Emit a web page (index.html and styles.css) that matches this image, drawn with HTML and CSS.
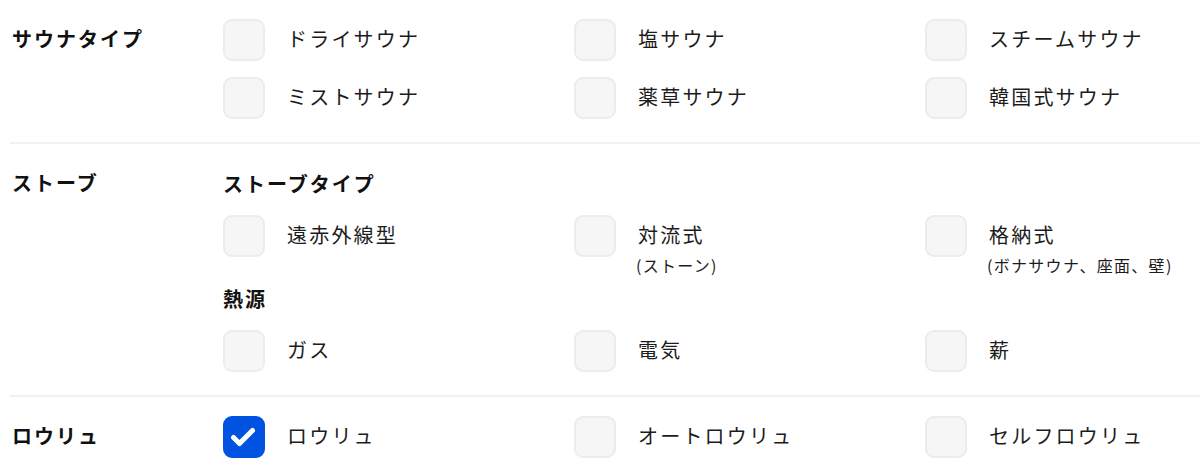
FILE: index.html
```html
<!DOCTYPE html>
<html lang="ja">
<head>
    <meta charset="UTF-8">
    <meta name="viewport" content="width=device-width, initial-scale=1.0">
    <title>サウナ設備</title>
    <link rel="stylesheet" href="styles.css">
</head>
<body>
    <div class="filters">
        <section class="filter-section">
            <h2 class="section-title">サウナタイプ</h2>
            <div class="section-body">
                <div class="option-grid">
                    <label class="option"><span class="box"></span><span class="option-text">ドライサウナ</span></label>
                    <label class="option"><span class="box"></span><span class="option-text">塩サウナ</span></label>
                    <label class="option"><span class="box"></span><span class="option-text">スチームサウナ</span></label>
                    <label class="option"><span class="box"></span><span class="option-text">ミストサウナ</span></label>
                    <label class="option"><span class="box"></span><span class="option-text">薬草サウナ</span></label>
                    <label class="option"><span class="box"></span><span class="option-text">韓国式サウナ</span></label>
                </div>
            </div>
        </section>

        <section class="filter-section">
            <h2 class="section-title">ストーブ</h2>
            <div class="section-body">
                <h3 class="sub-title">ストーブタイプ</h3>
                <div class="option-grid">
                    <label class="option"><span class="box"></span><span class="option-text">遠赤外線型</span></label>
                    <label class="option"><span class="box"></span><span class="option-text">対流式<small class="option-note">(ストーン)</small></span></label>
                    <label class="option"><span class="box"></span><span class="option-text">格納式<small class="option-note">(ボナサウナ、座面、壁)</small></span></label>
                </div>
                <h3 class="sub-title">熱源</h3>
                <div class="option-grid">
                    <label class="option"><span class="box"></span><span class="option-text">ガス</span></label>
                    <label class="option"><span class="box"></span><span class="option-text">電気</span></label>
                    <label class="option"><span class="box"></span><span class="option-text">薪</span></label>
                </div>
            </div>
        </section>

        <section class="filter-section">
            <h2 class="section-title">ロウリュ</h2>
            <div class="section-body">
                <div class="option-grid">
                    <label class="option">
                        <span class="box checked">
                            <svg viewBox="0 0 42 42" width="42" height="42"><path d="M10.5 21.5 L16.5 27.5 L29.5 14.5" fill="none" stroke="#fff" stroke-width="5" stroke-linecap="round" stroke-linejoin="round"/></svg>
                        </span>
                        <span class="option-text">ロウリュ</span>
                    </label>
                    <label class="option"><span class="box"></span><span class="option-text">オートロウリュ</span></label>
                    <label class="option"><span class="box"></span><span class="option-text">セルフロウリュ</span></label>
                </div>
            </div>
        </section>
    </div>
</body>
</html>
```

FILE: styles.css
```css
body {
    margin: 0;
    font-family: "Noto Sans CJK JP", "Noto Sans", sans-serif;
    color: #1c1c1c;
    background-color: #fff;
}

.filters {
    padding-left: 10px;
}

.filter-section {
    display: flex;
    padding: 19px 0 23px;
    border-top: 2px solid #f1f1f1;
}

.filter-section:first-child {
    border-top: none;
}

.section-title {
    width: 213px;
    flex-shrink: 0;
    margin: 0;
    padding-left: 2px;
    box-sizing: border-box;
    font-size: 20px;
    font-weight: bold;
    letter-spacing: 2px;
    line-height: 40px;
    color: #111;
}

.section-body {
    flex: 1;
}

.sub-title {
    margin: 0 0 10px;
    font-size: 20px;
    font-weight: bold;
    letter-spacing: 2px;
    line-height: 42px;
    color: #111;
}

.option-grid + .sub-title {
    margin-top: 2px;
}

.option-grid {
    display: grid;
    grid-template-columns: repeat(3, 1fr);
    column-gap: 76px;
    row-gap: 16px;
}

.option {
    display: flex;
    align-items: flex-start;
    gap: 22px;
    cursor: pointer;
}

.box {
    width: 42px;
    height: 42px;
    flex-shrink: 0;
    box-sizing: border-box;
    border: 2px solid #ececec;
    border-radius: 9px;
    background-color: #f6f6f6;
}

.box.checked {
    border-color: #0052e0;
    background-color: #0052e0;
}

.box.checked svg {
    display: block;
    margin: -2px;
}

.option-text {
    display: flex;
    flex-direction: column;
    font-size: 20px;
    letter-spacing: 2.2px;
    line-height: 40px;
}

.option-note {
    font-size: 16px;
    letter-spacing: 1.3px;
    line-height: 21px;
    margin-left: -2px;
}
```
